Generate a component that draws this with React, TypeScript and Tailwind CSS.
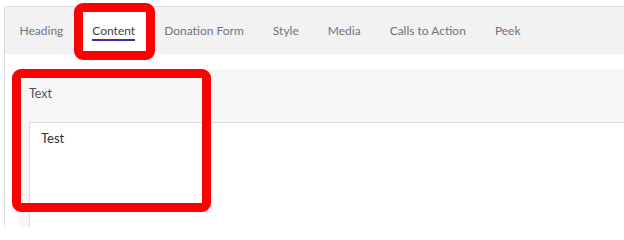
import React from 'react';

const tabs = ['Heading', 'Content', 'Donation Form', 'Style', 'Media', 'Calls to Action', 'Peek'];

const App: React.FC = () => {
  const active = 'Content';

  return (
    <div className="relative h-[227px] w-[624px] overflow-hidden bg-white font-['Lato','Liberation_Sans',sans-serif]">
      <div className="ml-[4px] mt-[6px] h-[240px] rounded-tl-[3px] border-l border-t border-[#dcdde0]">
        {/* Tab bar */}
        <div className="flex h-[47px] items-center gap-px bg-[#f2f2f2] pl-[0.5px] pt-[2px]">
          {tabs.map((tab) => (
            <div
              key={tab}
              className={`flex h-full items-center px-[14px] text-[12px] ${
                tab === active ? 'bg-white text-[#3b3f4a]' : 'text-[#70737b]'
              }`}
            >
              <span
                className={`pt-[1px] leading-[16px] ${
                  tab === active ? 'border-b-2 border-[#4a2aa0]' : 'border-b-2 border-transparent'
                }`}
              >
                {tab}
              </span>
            </div>
          ))}
        </div>

        {/* Content field */}
        <div className="ml-[13px] mt-[15px] h-[200px] bg-[#f7f7f7] pl-[11px]">
          <div className="pt-[17px] text-[12.5px] leading-[16px] text-[#50535a]">Text</div>
          <div className="mt-[20px] h-[140px] border-l border-t border-[#dadbde] bg-white px-[11px] pt-[6px] text-[13px] text-[#2f3238]">
            Test
          </div>
        </div>
      </div>

      {/* Annotation boxes */}
      <div className="absolute left-[74px] top-[3px] h-[57px] w-[81px] rounded-[9px] border-[9px] border-[#ff0000]" />
      <div className="absolute left-[12px] top-[69px] h-[143px] w-[199px] rounded-[9px] border-[9px] border-[#ff0000]" />
    </div>
  );
};

export default App;
